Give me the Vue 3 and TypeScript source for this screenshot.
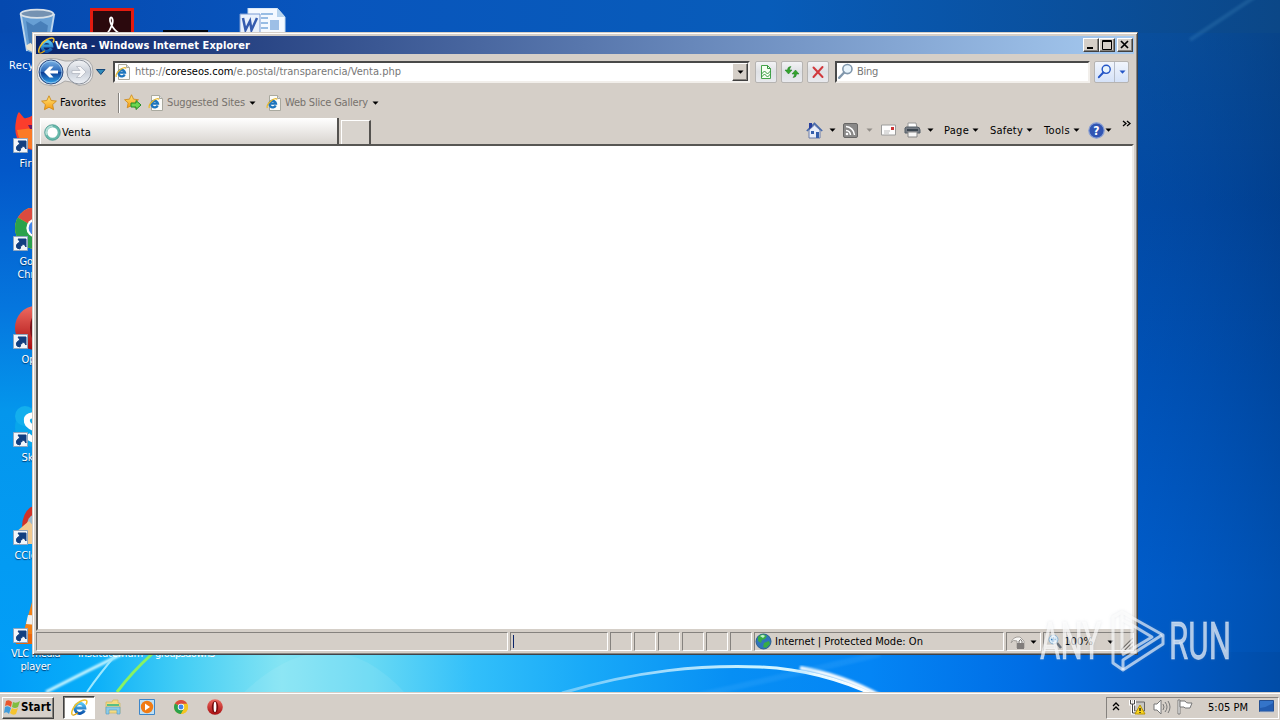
<script setup lang="ts">
import type { Directive } from 'vue'

/* Tracks a label out or in until it spans the given width in pixels. */
const vFit: Directive<HTMLElement, number> = {
  mounted(el, { value }) {
    const natural = el.getBoundingClientRect().width
    const count = el.textContent?.length ?? 1
    el.style.letterSpacing = `${(value - natural) / count}px`
  },
}

interface Shortcut {
  id: string
  lines: { text: string; width: number }[]
}

const shortcuts: Shortcut[] = [
  { id: 'firefox', lines: [{ text: 'Firefox', width: 34 }] },
  { id: 'chrome', lines: [{ text: 'Google', width: 34 }, { text: 'Chrome', width: 38 }] },
  { id: 'opera', lines: [{ text: 'Opera', width: 30 }] },
  { id: 'skype', lines: [{ text: 'Skype', width: 30 }] },
  { id: 'ccleaner', lines: [{ text: 'CCleaner', width: 44 }] },
  { id: 'vlc', lines: [{ text: 'VLC media', width: 49 }, { text: 'player', width: 30 }] },
]
const smallPanes = [1, 2, 3, 4, 5, 6]
</script>

<template>
  <div class="desktop">
    <svg class="defs" width="0" height="0">
      <defs>
        <linearGradient id="gBlue" x1="0" y1="0" x2="0" y2="1"><stop offset="0" stop-color="#7db4e6" /><stop offset=".48" stop-color="#2a67b8" /><stop offset=".52" stop-color="#0c3f96" /><stop offset="1" stop-color="#32a5ec" /></linearGradient>
        <linearGradient id="gGrey" x1="0" y1="0" x2="0" y2="1"><stop offset="0" stop-color="#f4f5f7" /><stop offset=".5" stop-color="#c9cfd9" /><stop offset="1" stop-color="#eef1f6" /></linearGradient>
        <linearGradient id="gStar" x1="0" y1="0" x2="0" y2="1"><stop offset="0" stop-color="#ffe87a" /><stop offset="1" stop-color="#f79a10" /></linearGradient>
        <linearGradient id="gRed" x1="0" y1="0" x2="0" y2="1"><stop offset="0" stop-color="#ee6a60" /><stop offset="1" stop-color="#a80d10" /></linearGradient>
        <linearGradient id="gE" x1="0" y1="0" x2="0" y2="1"><stop offset="0" stop-color="#55c4f4" /><stop offset="1" stop-color="#0b55ae" /></linearGradient>
        <symbol id="ie" viewBox="0 0 16 16">
          <path d="M12.6 10.8A4.700 4.700 0 1 1 13 8.500H4.500" fill="none" stroke="url(#gE)" stroke-width="2.900" />
          <path d="M1.200 14.800C-.6 12 3 5.500 8 2.600C11.500.6 15 .3 15 2.500C15 3.500 14.700 4.400 14 5.200" fill="none" stroke="#f0c02c" stroke-width="1.400" />
          <path d="M1.200 14.800C2.600 15.700 5 14.200 6.400 13" fill="none" stroke="#d9a010" stroke-width="1.100" />
        </symbol>
        <symbol id="iepage" viewBox="0 0 16 16">
          <path d="M3.500.5h8l3 3v12h-11z" fill="#fbfbf8" stroke="#a9a99f" />
          <path d="M11.500.5v3h3" fill="#ddd" stroke="#a9a99f" />
          <path d="M9.700 10.500A3.300 3.300 0 1 1 10 8.700H4" fill="none" stroke="#1c74bd" stroke-width="2.300" />
          <path d="M1.300 13Q0 10 5.500 5.500Q10 2.500 11 4.500" fill="none" stroke="#e9b82b" stroke-width="1.200" />
        </symbol>
        <symbol id="star" viewBox="0 0 16 16"><path d="M8 .8l2.200 4.700 5.200.6-3.800 3.500 1 5.100L8 12.200l-4.600 2.500 1-5.100L.6 6.100l5.200-.6z" fill="url(#gStar)" stroke="#cf8a1a" stroke-width=".9" /></symbol>
        <symbol id="caret" viewBox="0 0 7 4"><path d="M.5.5h6L3.500 3.800z" fill="currentColor" /></symbol>
        <symbol id="lens" viewBox="0 0 16 16"><circle cx="9.800" cy="5.700" r="4.300" fill="#e7f3fb" stroke="currentColor" stroke-width="1.500" /><path d="M6.700 9L2 14" stroke="currentColor" stroke-width="2.200" stroke-linecap="round" /></symbol>
        <symbol id="chromeBall" viewBox="0 0 40 40">
          <circle cx="20" cy="20" r="20" fill="#f4c520" /><path d="M20 20L2.700 10A20 20 0 0 1 37.300 10z" fill="#db4b3f" /><path d="M2.700 10A20 20 0 0 0 20 40L29 25 20 20z" fill="#2ba24c" /><path d="M20 11h17.800A20 20 0 0 1 20 40l8-15z" fill="#f4c520" /><circle cx="20" cy="20" r="9.200" fill="#fff" /><circle cx="20" cy="20" r="7" fill="#4285e8" />
        </symbol>
        <symbol id="operaBall" viewBox="0 0 40 40"><circle cx="20" cy="20" r="19.500" fill="url(#gRed)" /><ellipse cx="20" cy="20" rx="8" ry="15" fill="#760c0d" /><ellipse cx="20" cy="20" rx="3.400" ry="13" fill="#fff" /></symbol>
      </defs>
    </svg>

    <svg class="wallpaper" viewBox="0 0 1280 720" preserveAspectRatio="none">
      <defs>
        <linearGradient id="wTop" x1="0" x2="1" y1="0" y2="0"><stop offset="0" stop-color="#0549af" /><stop offset=".25" stop-color="#0855bd" /><stop offset=".6" stop-color="#085cb9" /><stop offset=".85" stop-color="#0a4f9b" /><stop offset="1" stop-color="#0b4787" /></linearGradient>
        <linearGradient id="wLeft" x1="0" x2="0" y1="0" y2="1"><stop offset="0" stop-color="#054ab1" /><stop offset=".2" stop-color="#0358c9" /><stop offset=".4" stop-color="#0576de" /><stop offset=".55" stop-color="#0496ec" /><stop offset="1" stop-color="#02a0fa" /></linearGradient>
        <linearGradient id="wRight" x1="0" x2="0" y1="0" y2="1"><stop offset="0" stop-color="#0b4a90" /><stop offset=".25" stop-color="#02449a" /><stop offset=".5" stop-color="#004eb0" /><stop offset=".8" stop-color="#005bc8" /><stop offset="1" stop-color="#005bc5" /></linearGradient>
        <linearGradient id="wShade" x1="0" x2="1" y1="0" y2="0"><stop offset="0" stop-color="#0062d4" stop-opacity=".2" /><stop offset="1" stop-color="#003576" stop-opacity=".3" /></linearGradient>
        <linearGradient id="wBottom" x1="0" x2="1" y1="0" y2="0"><stop offset="0" stop-color="#029cf8" /><stop offset=".07" stop-color="#08aef9" /><stop offset=".14" stop-color="#42cdf5" /><stop offset=".22" stop-color="#84e4f3" /><stop offset=".29" stop-color="#67d9f4" /><stop offset=".37" stop-color="#32bffa" /><stop offset=".46" stop-color="#18a9f8" /><stop offset=".57" stop-color="#078ff4" /><stop offset=".68" stop-color="#0485f5" /><stop offset=".8" stop-color="#006ee5" /><stop offset=".9" stop-color="#005bc9" /><stop offset="1" stop-color="#004ca7" /></linearGradient>
        <linearGradient id="arc" gradientUnits="userSpaceOnUse" x1="560" x2="880" y1="0" y2="0"><stop offset="0" stop-color="#fff" stop-opacity=".35" /><stop offset=".6" stop-color="#c8f2ff" /><stop offset="1" stop-color="#fff" /></linearGradient>
        <filter id="soft"><feGaussianBlur stdDeviation="1" /></filter>
      </defs>
      <rect width="1280" height="720" fill="url(#wTop)" />
      <rect y="33" width="60" height="687" fill="url(#wLeft)" />
      <rect x="1130" y="33" width="150" height="687" fill="url(#wRight)" />
      <rect x="1130" y="33" width="150" height="687" fill="url(#wShade)" />
      <path d="M1280-20L1190 40" stroke="#55a0d0" stroke-width="4" opacity=".2" filter="url(#soft)" />
      <rect y="652" width="1280" height="68" fill="url(#wBottom)" />
      <path d="M242 694Q330 610 406 694z" fill="#fff" opacity=".08" />
      <path d="M46 692Q87 671 130 650" stroke="#d5faff" stroke-width="3" fill="none" filter="url(#soft)" />
      <path d="M87 692Q100 673 119 651" stroke="#9be8ff" stroke-width="2" fill="none" />
      <path d="M117 692Q132 672 152 654" stroke="#88f263" stroke-width="3" fill="none" />
      <path d="M562 693C640 670 700 665 760 667C805 669 842 680 876 696" stroke="url(#arc)" stroke-width="3" fill="none" />
      <path d="M800 668Q842 675 882 697" stroke="#fff" stroke-width="4" fill="none" filter="url(#soft)" />
      <path d="M700 695Q790 675 880 654" stroke="#58b7ff" stroke-width="6" opacity=".18" filter="url(#soft)" />
    </svg>

    <div class="back-icons">
      <svg class="bin" width="40" height="46" viewBox="0 0 44 50">
        <path d="M4 6L11 47Q22 53 34 47L41 6z" fill="#79aedb" opacity=".85" /><path d="M10 14l8 5 8-5 8 5-3 25H14z" fill="#487fb9" /><path d="M4 6L11 47M41 6L34 47" stroke="#bdd6ed" stroke-width="2" />
        <ellipse cx="22" cy="6" rx="18" ry="4.500" fill="#7592b2" stroke="#d9e1e8" stroke-width="2" /><path d="M10 41l5-3 4 5-2 5-6-3z" fill="#eee5d2" />
      </svg>
      <svg class="pdf" width="44" height="30" viewBox="0 0 44 30"><path d="M1.500 30V1.500h41V30" fill="#2b090d" stroke="#e31b10" stroke-width="3" /><path d="M16 27C22 20 24 13 22 10C20 8 19 12 21 16C23 21 27 24 30 26" fill="none" stroke="#fff" stroke-width="1.800" /></svg>
      <div class="black-edge"></div>
      <svg class="word" width="48" height="30" viewBox="0 0 48 30"><path d="M9 0h29l8 9v21H9z" fill="#f4f9ff" stroke="#c2d9ef" /><path d="M38 0v9h8" fill="#b7d4ee" /><path d="M22 6h12M22 10h7M22 15h7M22 20h7" stroke="#79a9dc" stroke-width="1.500" /><path d="M31 12h9v10h-9z" fill="#9dbfe6" /><path d="M1 6h20v20H1z" fill="#e9f1fc" stroke="#7b9bd3" /><path d="M4 10l2.500 12L11 13l1.500 9L18 10" stroke="#355caf" stroke-width="2.500" fill="none" /></svg>
      <span v-fit="61" class="bin-label">Recycle Bin</span>
    </div>

    <div class="shortcuts">
      <div v-for="item in shortcuts" :key="item.id" class="shortcut">
        <svg width="46" height="46" viewBox="0 0 46 46">
          <g v-if="item.id === 'firefox'"><path d="M3 11Q4 4 6 2L11 8Q15 9 20 5Q43 8 40 30Q28 47 9 36Q0 26 3 11z" fill="#fb3d2c" /><path d="M4 20Q8 43 30 39L25 22Q18 17 12 19z" fill="#fb7a25" /><path d="M15 15h8v4h-6z" fill="#6b1861" /></g>
          <use v-else-if="item.id === 'chrome'" href="#chromeBall" x="2" y="-1" width="42" height="42" />
          <g v-else-if="item.id === 'opera'"><ellipse cx="22" cy="22" rx="20" ry="22" fill="url(#gRed)" /><ellipse cx="25" cy="22" rx="8" ry="16" fill="#76121a" /></g>
          <g v-else-if="item.id === 'skype'"><circle cx="22" cy="23" r="20" fill="#08a6eb" /><circle cx="12" cy="12" r="10" fill="#13afed" /><path d="M29 12Q12 9 14 18Q15 23 29 27M14 31Q19 38 28 34" stroke="#fff" stroke-width="6" fill="none" /></g>
          <g v-else-if="item.id === 'ccleaner'"><path d="M35 3Q10-1 9 25L16 37H40z" fill="#d13228" /><circle cx="26" cy="23" r="12" fill="#9cbace" /><path d="M3 30L16 19 22 26V42H10z" fill="#f2c990" /></g>
          <g v-else><path d="M19 2h7l8 32H10z" fill="#f38117" /><path d="M15 15l17 1 3 10-22-2z" fill="#eef1f2" /><path d="M3 34h39v10H3z" fill="#e9670d" /></g>
          <path d="M.5 28.500h14v14H.5z" fill="#f1f5fa" stroke="#8fa6bf" />
          <path d="M4 40Q2 36 7 34L5 31h8v8l-2-3Q7 37 7 41z" fill="#123f80" stroke="#123f80" />
        </svg>
        <span v-for="line in item.lines" :key="line.text" v-fit="line.width">{{ line.text }}</span>
      </div>
    </div>
    <span v-fit="65" class="hidden-label one">institutemum</span>
    <span v-fit="60" class="hidden-label two">groupsdown3</span>

    <section class="window">
      <header class="titlebar">
        <svg width="17" height="17"><use href="#ie" width="17" height="17" /></svg>
        <b v-fit="195">Venta - Windows Internet Explorer</b>
        <div class="sysbtns">
          <button class="raised"><svg width="12" height="10"><path d="M2 8h6" stroke="#000" stroke-width="2" /></svg></button>
          <button class="raised"><svg width="12" height="10"><path d="M1.500 9.500v-9h9v9zM1 1.500h10" fill="none" stroke="#000" /></svg></button>
          <button class="raised close"><svg width="12" height="10"><path d="M2 1l7 7M9 1L2 8" stroke="#000" stroke-width="1.700" /></svg></button>
        </div>
      </header>

      <div class="navrow">
        <svg class="pod" width="76" height="30" viewBox="0 0 76 30">
          <path d="M14 1.500Q20 1 29 4Q35 5 43 1.500Q57 1 57 15Q57 28 43 28.500Q35 24 29 24Q20 30 14 28.500Q1 28 1 15Q1 2 14 1.500z" fill="#e6e6e8" stroke="#aaa9a8" />
          <circle cx="15" cy="15" r="12" fill="url(#gBlue)" stroke="#344f82" /><circle cx="15" cy="15" r="10.900" fill="none" stroke="#b9dbf6" stroke-width=".7" />
          <path d="M22 13.500h-8l3.500-4h-4L8 15l5.500 5.500h4l-3.500-4h8z" fill="#fff" />
          <circle cx="43" cy="15" r="12" fill="url(#gGrey)" stroke="#8d939d" /><path d="M36 13.500h8l-3.500-4h4L50 15l-5.500 5.500h-4l3.500-4h-8z" fill="#f8f8fa" stroke="#adb2bc" stroke-width=".7" />
          <path d="M60.500 12.500h8.500L64.800 17.500z" fill="#2f8aba" stroke="#164778" />
        </svg>
        <div class="field address">
          <svg width="16" height="16"><use href="#iepage" width="16" height="16" /></svg>
          <span v-fit="266">http://<em>coreseos.com</em>/e.postal/transparencia/Venta.php</span>
          <button class="raised drop"><svg width="7" height="4"><use href="#caret" width="7" height="4" /></svg></button>
        </div>
        <button class="flat"><svg width="16" height="16" viewBox="0 0 16 16"><path d="M3.500 1.500h6l3 3v10h-9z" fill="#f5fff2" stroke="#44a34b" /><path d="M9.500 1.500v3h3M3.500 10l3-3 3 3 3-3M3.500 13l3-3 3 3 3-3" fill="none" stroke="#369641" /></svg></button>
        <button class="flat"><svg width="16" height="16" viewBox="0 0 16 16"><path d="M7 2.500Q3.500 2.500 3.500 6H1l3.500 4L8 6H5.500Q5.500 4 7 2.500zM9 13.500Q12.500 13.500 12.500 10H15l-3.500-4L8 10h2.500Q10.500 12 9 13.500z" fill="#35a42c" stroke="#177c22" stroke-width=".5" /></svg></button>
        <button class="flat"><svg width="16" height="16" viewBox="0 0 16 16"><path d="M3.500 3.500l9 9.500M12.500 3L3.500 13" stroke="#d1393d" stroke-width="2" stroke-linecap="round" /></svg></button>
        <div class="field search"><svg width="17" height="17"><use href="#lens" width="17" height="17" /></svg><span v-fit="21">Bing</span></div>
        <div class="flat searchgo"><svg width="16" height="16"><use href="#lens" width="15" height="15" /></svg><i></i><svg width="7" height="4"><use href="#caret" width="7" height="4" /></svg></div>
      </div>

      <div class="favrow">
        <svg width="16" height="16"><use href="#star" width="16" height="16" /></svg>
        <span v-fit="46">Favorites</span>
        <i class="sep"></i>
        <svg width="18" height="17" viewBox="0 0 18 17"><use href="#star" width="15" height="15" /><path d="M7 9h5V6.500l5 4.500-5 4.500V13H7z" fill="#6bd750" stroke="#218a27" /></svg>
        <svg width="16" height="16"><use href="#iepage" width="16" height="16" /></svg>
        <span v-fit="78" class="dim">Suggested Sites</span>
        <svg width="7" height="4"><use href="#caret" width="7" height="4" /></svg>
        <svg width="16" height="16"><use href="#iepage" width="16" height="16" /></svg>
        <span v-fit="83" class="dim">Web Slice Gallery</span>
        <svg width="7" height="4"><use href="#caret" width="7" height="4" /></svg>
      </div>

      <div class="tabrow">
        <div class="tab"><svg width="17" height="17" viewBox="0 0 17 17"><circle cx="8.500" cy="8.500" r="6.500" fill="#fff" stroke="#68b9ab" stroke-width="2.600" /><path d="M2.500 11A6.500 6.500 0 0 1 8.500 2" fill="none" stroke="#b4ded6" stroke-width="2" /><circle cx="8.500" cy="8.500" r="7.800" fill="none" stroke="#378f86" stroke-width=".7" /></svg><span v-fit="29">Venta</span></div>
        <div class="newtab"></div>
        <div class="commands">
          <svg width="17" height="17" viewBox="0 0 17 17"><path d="M3 8v8h11V8L8.500 3z" fill="#e8edf9" stroke="#6b7ca9" /><path d="M.8 9L8.500 1.500 16.200 9" fill="none" stroke="#496bab" stroke-width="1.700" /><path d="M3 1h3v4L3 7z" fill="#273e9d" /><path d="M10 10h3v6h-3zM5 9h3v3H5z" fill="#345eac" /></svg>
          <svg class="ar" width="7" height="4"><use href="#caret" width="7" height="4" /></svg>
          <svg width="15" height="15" viewBox="0 0 15 15"><rect x=".5" y=".5" width="14" height="14" rx="1.500" fill="#8a8988" stroke="#686766" /><path d="M3 7.500a5 5 0 0 1 4.500 4.500M3 3.500a9 9 0 0 1 8.500 8.500" fill="none" stroke="#fff" stroke-width="1.500" /><circle cx="4" cy="11" r="1.300" fill="#fff" /></svg>
          <svg class="ar faded" width="7" height="4"><use href="#caret" width="7" height="4" /></svg>
          <svg width="15" height="12" viewBox="0 0 15 12"><path d="M.5 1h14v10H.5z" fill="#fdfdfd" stroke="#9c9c9b" /><path d="M10 3h3v3h-3z" fill="#c33" /><path d="M3 7h6M3 9h5" stroke="#bbb" /></svg>
          <svg width="17" height="16" viewBox="0 0 17 16"><path d="M4 6V1h8l1 5" fill="#fff" stroke="#999" /><path d="M1 6Q2 4.500 4 5h9Q16 5 16 8v3H1z" fill="#777d85" stroke="#555e66" /><path d="M4 10h9v5H4z" fill="#f7f7f7" stroke="#888" /><path d="M3 8h11" stroke="#27353f" stroke-width="1.500" /></svg>
          <svg class="ar" width="7" height="4"><use href="#caret" width="7" height="4" /></svg>
          <span v-fit="25">Page</span><svg class="ar" width="7" height="4"><use href="#caret" width="7" height="4" /></svg>
          <span v-fit="33">Safety</span><svg class="ar" width="7" height="4"><use href="#caret" width="7" height="4" /></svg>
          <span v-fit="26">Tools</span><svg class="ar" width="7" height="4"><use href="#caret" width="7" height="4" /></svg>
          <svg width="17" height="17" viewBox="0 0 17 17"><circle cx="8.500" cy="8.500" r="7.700" fill="#3155b3" stroke="#8ba1d5" stroke-width="1.200" /><text x="8.500" y="13" text-anchor="middle" fill="#fff" font-size="12" font-weight="bold">?</text></svg>
          <svg class="ar" width="7" height="4"><use href="#caret" width="7" height="4" /></svg>
          <svg class="more" width="10" height="8" viewBox="0 0 10 8"><path d="M1 1l3 2.500L1 6M5 1l3 2.500L5 6" fill="none" stroke="#000" stroke-width="1.300" /></svg>
        </div>
      </div>

      <main class="page"></main>

      <footer class="status">
        <div class="pane"></div><div class="pane progress"><i></i></div>
        <div v-for="n in smallPanes" :key="n" class="pane"></div>
        <div class="pane zone">
          <svg width="17" height="17" viewBox="0 0 17 17"><circle cx="8.500" cy="8.500" r="7.500" fill="#2f75bb" stroke="#285f92" /><path d="M3 4Q7-1 12 3L10 6 7 7 6 10 3 8zM9 10l5-2 1 3-4 4-3-1z" fill="#39ac44" /><path d="M5 3Q8 1 10 3L8 5z" fill="#bdf2d1" /></svg>
          <span v-fit="148">Internet | Protected Mode: On</span>
        </div>
        <div class="pane filter"><svg width="16" height="16" viewBox="0 0 16 16"><path d="M1 9Q3 2 10 3l4 4v7H7V7Q3 5 1 9z" fill="#f8f7f5" stroke="#a4a09b" /><path d="M7 9h7v6H7z" fill="#817d7b" /><path d="M9 9V7q2-3 3 0v2" fill="none" stroke="#77736f" /></svg><svg width="7" height="4"><use href="#caret" width="7" height="4" /></svg></div>
        <div class="pane zoom">
          <svg width="15" height="15" viewBox="0 0 15 15"><circle cx="5.500" cy="5.500" r="4.500" fill="#dcedf9" stroke="#8ab2d1" /><path d="M9 9l4 5" stroke="#68727c" stroke-width="2.500" /><path d="M5.500 3v5M3 5.500h5" stroke="#2d7fc5" stroke-width="1.500" /></svg>
          <span v-fit="29">100%</span><svg width="7" height="4"><use href="#caret" width="7" height="4" /></svg>
          <svg class="grip" width="12" height="12" viewBox="0 0 12 12"><path d="M0 12L12 0M4 12l8-8M8 12l4-4" stroke="#77736e" stroke-width="1.400" /><path d="M1.500 12L12 1.500M5.500 12L12 5.500" stroke="#fff" stroke-width=".8" /></svg>
        </div>
      </footer>
    </section>

    <svg class="watermark" width="220" height="76" viewBox="0 0 220 76">
      <defs><filter id="halo" x="-20%" y="-20%" width="140%" height="140%"><feDropShadow dx="0" dy="0" stdDeviation="1.500" flood-color="#8796a8" flood-opacity=".35" /></filter></defs>
      <g filter="url(#halo)">
        <g class="letters">
          <text x="5" y="53" textLength="61" lengthAdjust="spacingAndGlyphs">ANY</text>
          <text x="134" y="53" textLength="62" lengthAdjust="spacingAndGlyphs">RUN</text>
        </g>
        <g fill="none" stroke="#fff" stroke-opacity=".62" stroke-width="3" stroke-linejoin="round">
          <path d="M87 47V6L78 11V57L88 64 128 38V29L87 6" />
          <path d="M97 47V19L117 31 87 49M88 64V54L127 29M97 19L87 14" />
        </g>
      </g>
    </svg>

    <nav class="taskbar">
      <button class="raised start"><svg width="17" height="17" viewBox="0 0 17 17"><path d="M2 2Q5 0 8 3L7 8Q4 5 1 7z" fill="#e9552c" /><path d="M9 3q3 2 7-1l-2 6q-3 2-6 0z" fill="#80bd40" /><path d="M1 8q3-2 6 1l-2 6q-2-3-5-1z" fill="#429cdb" /><path d="M8 9q3 2 6 0l-2 6q-3 2-6-1z" fill="#f6c42f" /></svg><b v-fit="30">Start</b></button>
      <div class="active"><svg width="17" height="17"><use href="#ie" width="17" height="17" /></svg></div>
      <svg width="16" height="16" viewBox="0 0 16 16"><path d="M1 3h6l1-2h5v3h2v10H1z" fill="#f4db82" stroke="#ceb45b" stroke-width=".7" /><path d="M2 5h12v2H2z" fill="#58bf83" /><path d="M1 8h14v7h-3v-4H4v4H1z" fill="#8dcbe7" stroke="#4d9acb" stroke-width=".6" /></svg>
      <svg width="16" height="16" viewBox="0 0 16 16"><path d="M.5.5h15v15H.5z" fill="#bee0f5" stroke="#3d86c9" /><circle cx="8" cy="8" r="6.200" fill="#f17b13" /><path d="M6 4.500l5 3.500-5 3.500z" fill="#fff" /></svg>
      <svg width="16" height="14"><use href="#chromeBall" x="1" width="14" height="14" /></svg>
      <svg width="16" height="16"><use href="#operaBall" width="16" height="16" /></svg>
      <div class="tray">
        <svg width="8" height="10" viewBox="0 0 8 10"><path d="M1 4l3-3 3 3M1 8l3-3 3 3" fill="none" stroke="#000" stroke-width="1.300" /></svg>
        <svg width="17" height="16" viewBox="0 0 17 16"><path d="M5.500 3h10v9h-10z" fill="#c8c7c4" stroke="#666" /><path d="M1.500 1v4h4V1M3.500 5v9h5" fill="none" stroke="#fff" stroke-width="3" /><path d="M1.500 1v4h4V1M3.500 5v9h5" fill="none" stroke="#444" /><path d="M11 6l5 9H6z" fill="#fbd51e" stroke="#b99506" /><path d="M11 9v3M11 13v1" stroke="#222" stroke-width="1.400" /></svg>
        <svg width="18" height="16" viewBox="0 0 18 16"><path d="M1 5h3l4-4v14l-4-4H1z" fill="#fff" stroke="#777" /><path d="M10 5q2 3 0 6M12 3q4 5 0 10M15 2q4 6 0 12" fill="none" stroke="#777" /></svg>
        <svg width="16" height="16" viewBox="0 0 16 16"><path d="M1 1h2v14H1z" fill="#fff" stroke="#666" stroke-width=".8" /><path d="M3 2h5q1 2 3 2h4l-2 5H8L7 8H3z" fill="#fff" stroke="#777" /></svg>
        <span v-fit="40">5:05 PM</span>
        <svg width="16" height="14" viewBox="0 0 16 14"><path d="M.5.5h14v11H.5z" fill="#3474c9" stroke="#244f91" /><path d="M1 8Q8 7 14 3v8H1z" fill="#225cb0" /><path d="M1 12h14" stroke="#bbc7d7" /></svg>
      </div>
    </nav>
  </div>
</template>

<style>
html, body { overflow: hidden; }
</style>

<style scoped>
.desktop { position: relative; width: 1280px; height: 720px; overflow: hidden; font: 11px/13px "DejaVu Sans Condensed", "DejaVu Sans", sans-serif; color: #000; }
.desktop * { box-sizing: border-box; }
span, b { display: inline-block; white-space: nowrap; }
svg { display: block; flex: none; }
button { font: inherit; padding: 0; margin: 0; border: 0; color: #000; }
.defs { position: absolute; }
.wallpaper { position: absolute; inset: 0; width: 1280px; height: 720px; }
.bin, .pdf, .word, .black-edge, .bin-label { position: absolute; }
.bin { left: 17px; top: 8px; }
.pdf { left: 90px; top: 8px; }
.black-edge { left: 163px; top: 30px; width: 45px; height: 4px; background: #02060e; }
.word { left: 239px; top: 8px; }
.bin-label { left: 9px; top: 59px; color: #fff; }
.shortcuts { position: absolute; left: 0; top: 110px; width: 78px; }
.shortcut { height: 98px; display: flex; flex-direction: column; align-items: center; color: #fff; text-shadow: 0 1px 1px #00376e; padding-right: 5px; }
.shortcut svg { align-self: flex-start; margin: 0 0 1px 13px; }
.shortcut:last-child { padding-right: 7px; }
.hidden-label { position: absolute; top: 647px; color: #fff; }
.one { left: 78px; }
.two { left: 155px; }

.window { position: absolute; left: 32px; top: 32px; width: 1106px; height: 623px; background: #d5cfc8; border: 1px solid #d5cfc8; border-right-color: #3f4248; border-bottom-color: #3f4248; box-shadow: inset 1px 1px #fff, inset -1px -1px #888580; padding: 3px; display: flex; flex-direction: column; }
.titlebar { height: 18px; display: flex; align-items: center; background: linear-gradient(90deg, #0a246a, #a6caf0); color: #fff; padding-left: 2px; }
.titlebar b { margin-left: 0; }
.sysbtns { display: flex; margin-left: auto; padding-right: 1px; }
.raised { background: #d5cfc8; border: 1px solid; border-color: #fff #404040 #404040 #fff; box-shadow: inset -1px -1px #85827d; display: flex; align-items: center; justify-content: center; }
.sysbtns .raised { width: 16px; height: 14px; }
.sysbtns .close { margin-left: 2px; }
.navrow { height: 36px; display: flex; align-items: center; padding: 0 0 1px 0; }
.pod { margin: 0 1px 0 0; }
.field { height: 22px; background: #fff; border: 2px solid; border-color: #494949 #f2efeb #f2efeb #494949; display: flex; align-items: center; color: #777; }
.field em { font-style: normal; color: #000; }
.address { width: 637px; padding-left: 0; margin-right: 5px; }
.address span { margin-left: 4px; }
.drop { width: 16px; height: 18px; margin-left: auto; }
.flat { width: 22px; height: 22px; margin-right: 4px; background: linear-gradient(#f3f3f5, #dfe1e5 48%, #e8e9ed); border: 1px solid #b6b4b2; border-radius: 2px; display: flex; align-items: center; justify-content: center; }
.search { width: 255px; margin: 0 4px 0 2px; }
.search svg { color: #8097ac; }
.search span { margin-left: 3px; }
.searchgo { width: 35px; color: #2455c6; margin: 0; background: linear-gradient(#f1f5fc, #d5e2f8); justify-content: flex-start; padding-left: 2px; }
.searchgo i { height: 20px; width: 1px; background: #b6bdc9; margin: 0 4px 0 1px; }
.favrow { height: 26px; display: grid; grid-template-columns: 19px 58px 6px 24px 19px 82px 17px 19px 87px 8px; align-items: center; justify-items: start; padding: 0 0 1px 5px; }
.sep { width: 1px; height: 20px; background: #85827e; box-shadow: 1px 0 #fff; }
.dim { color: #77726d; }
.tabrow { height: 28px; display: flex; align-items: flex-end; padding-left: 4px; }
.tab { width: 299px; height: 26px; border-right: 2px solid #54524f; border-left: 1px solid #fff; background: linear-gradient(#fff, #d8d4cf); display: flex; align-items: center; padding: 2px 0 0 3px; }
.tab span { margin-left: 1px; }
.newtab { width: 30px; height: 24px; margin-left: 2px; border: 1px solid #fff; border-bottom: 0; border-right: 2px solid #54524f; background: #d8d3cd; }
.commands { height: 28px; margin-left: 435px; display: grid; grid-template-columns: 23px 14px 23px 15px 23px 23px 17px 28px 18px 36px 18px 29px 15px 17px 17px 10px; align-items: center; justify-items: start; }
.commands .faded { color: #918d87; }
.commands .more { margin-top: -13px; }
.page { flex: 1; min-height: 0; margin: 0; background: #fff; border: 2px solid; border-color: #575653 #f0eeea #d5cfc8 #575653; }
.status { height: 20px; margin-top: 1px; display: flex; gap: 2px; margin-bottom: -1px; }
.pane { width: 22px; height: 19px; border: 1px solid; border-color: #85827e #fff #fff #85827e; display: flex; align-items: center; }
.pane:first-child { width: 472px; }
.progress { width: 98px; padding-left: 2px; }
.progress i { width: 1px; height: 13px; background: #0a246a; }
.pane.zone { width: 250px; }
.zone span { margin-left: 3px; }
.pane.filter { width: 35px; padding-left: 3px; gap: 4px; }
.pane.zoom { flex: 1; padding-left: 4px; }
.zoom span { margin: 0 14px 0 1px; }
.grip { margin-left: auto; align-self: flex-end; }
.watermark { position: absolute; left: 1035px; top: 606px; }
.letters { fill: #fff; fill-opacity: .65; stroke: #fff; stroke-opacity: .4; stroke-width: .8; font-family: Roboto, sans-serif; font-size: 51px; }

.taskbar { position: absolute; left: 0; bottom: 0; width: 1280px; height: 28px; background: #d5cfc8; border-top: 1px solid #d5cfc8; box-shadow: inset 0 1px #fff; display: flex; align-items: center; padding: 3px 1px 1px 2px; }
.start { width: 52px; height: 22px; justify-content: flex-start; padding-left: 1px; }
.start b { font-size: 11.5px; }
.active { width: 32px; height: 23px; margin: 0 10px 0 9px; background: #fff; border: 1px solid; border-color: #404040 #fff #fff #404040; box-shadow: inset 1px 1px #85827e; display: flex; align-items: center; justify-content: center; }
.taskbar > svg { margin: -2px 18px 0 0; }
.tray { width: 173px; height: 22px; margin-left: auto; border: 1px solid; border-color: #85827e #fff #fff #85827e; display: grid; grid-template-columns: 17px 24px 24px 31px 51px 16px; align-items: center; justify-items: start; padding: 0 0 1px 5px; }
</style>
